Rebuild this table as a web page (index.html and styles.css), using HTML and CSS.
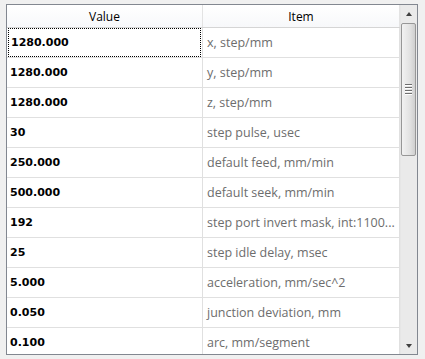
FILE: index.html
```html
<!DOCTYPE html>
<html lang="en">
<head>
  <meta charset="UTF-8">
  <title>Settings</title>
  <link rel="stylesheet" href="styles.css">
</head>
<body>
  <div class="frame">
    <div class="grid">
      <div class="row head">
        <div class="cell val-col">Value</div>
        <div class="cell item-col">Item</div>
      </div>
      <div class="row"><div class="cell val-col val"><span class="focus">1280.000</span></div><div class="cell item-col item">x, step/mm</div></div>
      <div class="row"><div class="cell val-col val">1280.000</div><div class="cell item-col item">y, step/mm</div></div>
      <div class="row"><div class="cell val-col val">1280.000</div><div class="cell item-col item">z, step/mm</div></div>
      <div class="row"><div class="cell val-col val">30</div><div class="cell item-col item">step pulse, usec</div></div>
      <div class="row"><div class="cell val-col val">250.000</div><div class="cell item-col item">default feed, mm/min</div></div>
      <div class="row"><div class="cell val-col val">500.000</div><div class="cell item-col item">default seek, mm/min</div></div>
      <div class="row"><div class="cell val-col val">192</div><div class="cell item-col item">step port invert mask, int:1100...</div></div>
      <div class="row"><div class="cell val-col val">25</div><div class="cell item-col item">step idle delay, msec</div></div>
      <div class="row"><div class="cell val-col val">5.000</div><div class="cell item-col item">acceleration, mm/sec^2</div></div>
      <div class="row"><div class="cell val-col val">0.050</div><div class="cell item-col item">junction deviation, mm</div></div>
      <div class="row"><div class="cell val-col val">0.100</div><div class="cell item-col item">arc, mm/segment</div></div>
    </div>
    <div class="scrollbar">
      <div class="arrow up"></div>
      <div class="track">
        <div class="thumb">
          <div class="grip"><span></span><span></span><span></span><span></span></div>
        </div>
      </div>
      <div class="arrow down"></div>
    </div>
  </div>
</body>
</html>
```

FILE: styles.css
```css
/* Window background */
body {
  margin: 0;
  background: #f0f0f0;
  font-family: 'Open Sans', sans-serif;
}

/* Grid frame */
.frame {
  margin: 4px 0 0 6px;
  width: 410px;
  height: 349px;
  border: 1px solid #828790;
  background: #ffffff;
  display: flex;
  overflow: hidden;
}

.grid {
  width: 393px;
  overflow: hidden;
}

.row {
  display: flex;
  height: 30px;
  box-sizing: border-box;
  border-bottom: 1px solid #e0e0e0;
}

.cell {
  box-sizing: border-box;
  display: flex;
  align-items: center;
  border-right: 1px solid #e0e0e0;
  white-space: nowrap;
  overflow: hidden;
}

.val-col {
  width: 196px;
}

.item-col {
  width: 197px;
}

/* Header */
.row.head {
  height: 23px;
  border-bottom: 1px solid #d5d5d5;
  background: linear-gradient(#ffffff, #f7f8fa);
}

.head .cell {
  justify-content: center;
  font-size: 12px;
  color: #000;
  border-right-color: #e3e3e3;
}

/* Body cells */
.val {
  font-family: 'DejaVu Sans', sans-serif;
  font-weight: bold;
  font-size: 11px;
  color: #000;
  padding-left: 3px;
}

.focus {
  flex: 1;
  height: 27px;
  line-height: 27px;
  margin-left: -2px;
  margin-right: 1px;
  padding-left: 2px;
  border: 1px dotted #000;
}

.item {
  font-size: 12.5px;
  color: #6d6d6d;
  padding-left: 4px;
}

/* Scrollbar */
.scrollbar {
  width: 17px;
  display: flex;
  flex-direction: column;
  background: #eaeaea;
  border-left: 1px solid #e6e6e6;
  box-sizing: border-box;
}

.arrow {
  height: 17px;
  display: flex;
  align-items: center;
  justify-content: center;
}

.arrow::before {
  content: '';
  border-left: 3px solid transparent;
  border-right: 3px solid transparent;
}

.up::before {
  border-bottom: 4px solid #404040;
}

.down::before {
  border-top: 4px solid #404040;
}

.track {
  flex: 1;
  padding-top: 1px;
}

.thumb {
  height: 131px;
  margin: 0 1px 0 0;
  border: 1px solid #979797;
  border-radius: 2px;
  background: linear-gradient(90deg, #f2f2f2, #e2e2e2 60%, #cfcfcf);
  display: flex;
  align-items: center;
  justify-content: center;
}

.grip {
  display: flex;
  flex-direction: column;
  gap: 1px;
}

.grip span {
  display: block;
  width: 7px;
  height: 1px;
  background: #6e6e6e;
  border-bottom: 1px solid #fff;
}
```
